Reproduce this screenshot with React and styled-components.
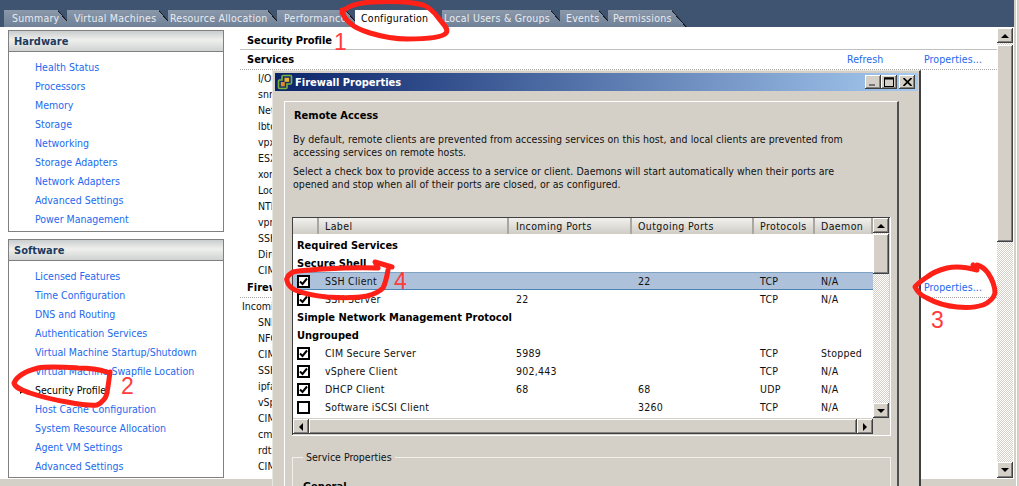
import React from "react";
import styled, { createGlobalStyle, css } from "styled-components";

const Global = createGlobalStyle`
  html, body { margin: 0; padding: 0; background: #d4d0c8; }
  body { font-family: "DejaVu Sans Condensed", "DejaVu Sans", "Liberation Sans", sans-serif; font-size: 10.5px; color: #111; }
`;

const GREY = "#d4d0c8";
const raised = css`
  background: ${GREY};
  box-shadow: inset -1px -1px #404040, inset 1px 1px #fff, inset -2px -2px #808080;
`;

const Page = styled.div`
  position: relative;
  width: 1019px;
  height: 486px;
  overflow: hidden;
  background: ${GREY};
  display: flex;
`;
const Frame = styled.div`
  width: 1014px;
  display: flex;
  flex-direction: column;
`;
const EdgeStrip = styled.div`
  width: 5px;
  height: 486px;
  box-sizing: border-box;
  border-left: 2px solid ${GREY};
  background: linear-gradient(to right, #fff 1px, ${GREY} 1px);
`;
const TopBar = styled.div`
  height: 27px;
  background: #3e5470;
  display: flex;
  align-items: flex-end;
  padding-left: 4px;
  flex: none;
`;
const Tab = styled.div`
  position: relative;
  width: ${p => p.$w}px;
  height: 17px;
  margin-right: -6px;
  box-sizing: border-box;
  padding: 1px 0 0 ${p => p.$pad}px;
  line-height: 15px;
  letter-spacing: 0.25px;
  white-space: nowrap;
  z-index: ${p => (p.$active ? 2 : 1)};
  color: ${p => (p.$active ? "#000" : "#e8ecf2")};
  background: ${p => (p.$active ? "#fff" : "linear-gradient(#8b98aa, #6f8097)")};
  clip-path: polygon(0 0, calc(100% - 15px) 0, 100% 100%, 0 100%);
  &::after {
    content: "";
    position: absolute;
    right: 0;
    top: 0;
    width: 15px;
    height: 17px;
    background: linear-gradient(to top right, transparent calc(50% - 1px), #101418 calc(50% - 1px), #101418 calc(50% + 0.6px), #3e5470 calc(50% + 0.6px));
  }
`;
const Main = styled.div`
  height: 451px;
  background: #fff;
  display: flex;
  flex: none;
  border-bottom: 1px solid #fff;
`;
const LeftCol = styled.div`
  width: 240px;
  flex: none;
  box-sizing: border-box;
  padding: 3px 0 0 8px;
  display: flex;
  flex-direction: column;
  gap: 7px;
`;
const Card = styled.section`
  width: 216px;
  box-sizing: border-box;
  border: 1px solid #808080;
  height: ${p => p.$h}px;
  flex: none;
`;
const CardHead = styled.h3`
  margin: 0;
  height: 20px;
  line-height: 21px;
  padding-left: 5px;
  font-size: 11px;
  font-weight: bold;
  color: #1d3a5c;
  background: linear-gradient(#c9cdcd, #eff0ee 45%, #cfd2d1);
  border-bottom: 1px solid #808080;
`;
const CardList = styled.div`
  padding: 6px 0 0 26px;
`;
const NavLink = styled.div`
  position: relative;
  height: 19px;
  line-height: 19px;
  white-space: nowrap;
  color: ${p => (p.$current ? "#000" : "#2469ee")};
  ${p => p.$current && css`
    &::before {
      content: "";
      position: absolute;
      left: -15px;
      top: 7px;
      border-left: 4px solid #000;
      border-top: 3px solid transparent;
      border-bottom: 3px solid transparent;
    }
  `}
`;
const RightPane = styled.div`
  flex: 1;
  min-width: 0;
  display: flex;
  flex-direction: column;
`;
const Heading = styled.div`
  height: 22px;
  line-height: 27px;
  margin-right: -1px;
  padding-left: 7px;
  font-weight: bold;
  font-size: 11px;
  letter-spacing: -0.1px;
  border-bottom: 1px solid #c0c0c0;
  color: #000;
`;
const SectionRow = styled.div`
  display: flex;
  height: 19px;
  line-height: 19px;
  padding-left: 7px;
  border-bottom: 1px dotted #a8a8a8;
`;
const SectionTitle = styled.div`
  font-weight: bold;
  font-size: 11px;
  color: #000;
  flex: 1;
`;
const ActionLink = styled.span`
  color: #2469ee;
  white-space: nowrap;
  width: ${p => p.$w}px;
  letter-spacing: 0.1px;
`;
const Items = styled.div`
  width: 32px;
  overflow: hidden;
`;
const Item = styled.div`
  height: 16px;
  line-height: 16px;
  white-space: nowrap;
  padding-left: ${p => (p.$out ? 2 : 18)}px;
`;
const MainScroll = styled.div`
  width: 16px;
  flex: none;
  padding-right: 1px;
  box-sizing: content-box;
  display: flex;
  flex-direction: column;
  padding-top: 1px;
`;
const Track = styled.div`
  flex: 1;
  background: repeating-conic-gradient(#d4d0c8 0 25%, #fff 0 50%) 0 0 / 2px 2px;
  display: flex;
  flex-direction: column;
`;
const Thumb = styled.div`
  ${raised}
  height: ${p => p.$h}px;
  margin-top: ${p => p.$top || 0}px;
  flex: none;
`;
const ArrowBtn = styled.div`
  ${raised}
  flex: none;
  width: ${p => p.$w || 16}px;
  height: ${p => p.$h || 15}px;
  display: flex;
  align-items: center;
  justify-content: center;
  &::before {
    content: "";
    ${p => p.$dir === "up" && "border-bottom: 4px solid #000; border-left: 4px solid transparent; border-right: 4px solid transparent;"}
    ${p => p.$dir === "down" && "border-top: 4px solid #000; border-left: 4px solid transparent; border-right: 4px solid transparent;"}
    ${p => p.$dir === "left" && "border-right: 4px solid #000; border-top: 4px solid transparent; border-bottom: 4px solid transparent;"}
    ${p => p.$dir === "right" && "border-left: 4px solid #000; border-top: 4px solid transparent; border-bottom: 4px solid transparent;"}
  }
`;
const BottomStrip = styled.div`
  flex: 1;
  background: ${GREY};
`;

/* dialog, lying over the page */
const Dialog = styled.div`
  position: absolute;
  left: 272px;
  top: 70px;
  width: 649px;
  height: 430px;
  box-sizing: border-box;
  background: ${GREY};
  border-top: 1px solid #e8e6e0;
  border-left: 1px solid #e8e6e0;
  border-right: 2px solid #404040;
  padding: 2px 1px 0 2px;
  z-index: 3;
`;
const TitleBar = styled.div`
  height: 18px;
  background: linear-gradient(to right, #0a246a, #a6caf0);
  display: flex;
  align-items: center;
  padding: 0 3px 0 2px;
  gap: 2px;
  color: #fff;
  font-weight: bold;
  font-size: 11px;
`;
const TitleText = styled.div`
  flex: 1;
`;
const WinBtns = styled.div`
  display: flex;
  align-items: center;
`;
const WinBtn = styled.div`
  ${raised}
  width: 16px;
  height: 14px;
  margin-left: ${p => p.$ml || 0}px;
  display: flex;
  align-items: center;
  justify-content: center;
`;
const Panel = styled.div`
  margin: 10px 20px 0 9px;
  width: 615px;
  height: 400px;
  box-sizing: border-box;
  border-top: 1px solid #fff;
  border-left: 1px solid #fff;
  border-right: 2px solid #505050;
  padding: 0 7px 0 7px;
  color: #111;
`;
const PanelTitle = styled.h4`
  margin: 0;
  height: 26px;
  line-height: 27px;
  padding-left: 2px;
  font-size: 11px;
  font-weight: bold;
  color: #000;
`;
const Para = styled.p`
  margin: ${p => p.$mt || 0}px 0 0 1px;
  line-height: 13px;
  width: 596px;
  letter-spacing: 0.055px;
  white-space: nowrap;
`;
const TableFrame = styled.div`
  margin-top: 26px;
  width: 599px;
  height: 219px;
  box-sizing: border-box;
  padding: 1px 1px 1px 1px;
  border-bottom: 1px solid #fff;
  border-right: 1px solid #fff;
  box-shadow: inset 1px 1px #404040;
  display: grid;
  grid-template-columns: 580px 16px;
  grid-template-rows: 200px 16px;
`;
const TableBody = styled.div`
  background: #fff;
  overflow: hidden;
`;
const cols = "26px 190px 123px 122px 61px 58px";
const HeaderRow = styled.div`
  display: grid;
  grid-template-columns: ${cols};
  height: 16px;
  margin-bottom: 2px;
`;
const HeaderCell = styled.div`
  padding-left: ${p => (p.$wide ? 7 : 6)}px;
  line-height: 16px;
  height: 16px;
  box-sizing: border-box;
  letter-spacing: 0.4px;
  white-space: nowrap;
  background: linear-gradient(#f2f1ee, #cfccc5);
  border-right: 2px solid #a9a7a0;
`;
const GroupRow = styled.div`
  height: 18px;
  line-height: 20px;
  padding-left: 4px;
  font-weight: bold;
  color: #000;
  font-size: 11px;
  white-space: nowrap;
`;
const DataRow = styled.div`
  display: grid;
  grid-template-columns: ${cols};
  height: 18px;
  box-sizing: border-box;
  align-items: center;
  ${p => p.$selected && css`
    background: #adc2da;
    border-top: 1px solid #7da2c4;
    border-bottom: 1px solid #4c84b4;
  `}
`;
const CheckCell = styled.div`
  padding-left: 4px;
  display: flex;
`;
const Check = styled.div`
  width: 13px;
  height: 13px;
  box-sizing: border-box;
  background: #fff;
  border: 2px solid #000;
  display: flex;
  align-items: center;
  justify-content: center;
`;
const Cell = styled.div`
  padding-left: ${p => (p.$wide ? 7 : 6)}px;
  white-space: nowrap;
  letter-spacing: 0.25px;
`;
const VScroll = styled.div`
  display: flex;
  flex-direction: column;
`;
const HScroll = styled.div`
  display: flex;
  height: 15px;
  margin-top: 1px;
`;
const HTrack = styled.div`
  flex: 1;
  ${raised}
`;
const Fieldset = styled.fieldset`
  margin: 15px 0 0 0;
  width: 599px;
  height: 120px;
  box-sizing: border-box;
  padding: 0 0 0 10px;
  border: 1px solid #f2f0ea;
`;
const Legend = styled.legend`
  padding: 0 3px;
  line-height: 13px;
`;
const FieldTitle = styled.div`
  font-weight: bold;
  font-size: 11px;
  margin-top: 16px;
  color: #000;
`;

/* hand-drawn annotations */
const Marks = styled.svg`
  position: absolute;
  left: 0;
  top: 0;
  width: 1019px;
  height: 486px;
  z-index: 4;
  pointer-events: none;
`;
const Num = styled.span`
  position: absolute;
  left: ${p => p.$x}px;
  top: ${p => p.$y}px;
  z-index: 5;
  font-family: "Liberation Sans", sans-serif;
  font-size: 23px;
  line-height: 23px;
  color: #ff3b3b;
`;

const CheckMark = () => (
  <svg width="9" height="9" viewBox="0 0 9 9"><path d="M1 4.5 L3.5 7 L8 1.5" fill="none" stroke="#000" strokeWidth="2" /></svg>
);
const Logo = () => (
  <svg width="16" height="16" viewBox="0 0 16 16" style={{ flex: "none" }}>
    <path d="M6 1.5h7.5a1 1 0 0 1 1 1V9a1 1 0 0 1-1 1H10v3.5a1 1 0 0 1-1 1H2.5a1 1 0 0 1-1-1V7a1 1 0 0 1 1-1H5V2.5a1 1 0 0 1 1-1z" fill="#12306e" stroke="#7fb23c" strokeWidth="1.6" />
    <rect x="7.5" y="3.8" width="4.6" height="4" fill="#f0b030" />
    <rect x="3.8" y="8" width="4" height="4.4" fill="#e08a20" />
  </svg>
);

const hardware = ["Health Status","Processors","Memory","Storage","Networking","Storage Adapters","Network Adapters","Advanced Settings","Power Management"];
const software = ["Licensed Features","Time Configuration","DNS and Routing","Authentication Services","Virtual Machine Startup/Shutdown","Virtual Machine Swapfile Location","Security Profile","Host Cache Configuration","System Resource Allocation","Agent VM Settings","Advanced Settings"];
const services = ["I/O Redirector (Storage vMotion)","snmpd","Network Login Server (Active Directory Service)","lbtd","vpxa","ESXi Shell","xorg","Local Security Authentication Server","NTP Daemon","vprobed","SSH","Direct Console UI","CIM Server"];
const firewall = ["SNMP Server","NFC","CIM Server","SSH Server","ipfam","vSphere Client","CIM Secure Server","cmmds","rdt","CIM SLP"];
const tabs = [["Summary",69,8],["Virtual Machines",107,7],["Resource Allocation",115,2],["Performance",84,7],["Configuration",93,6,true],["Local Users & Groups",124,2],["Events",54,6],["Permissions",79,5]];

const rows = [
  { g: "Required Services" },
  { g: "Secure Shell" },
  { c: 1, l: "SSH Client", o: "22", p: "TCP", d: "N/A", s: 1 },
  { c: 1, l: "SSH Server", i: "22", p: "TCP", d: "N/A" },
  { g: "Simple Network Management Protocol" },
  { g: "Ungrouped" },
  { c: 1, l: "CIM Secure Server", i: "5989", p: "TCP", d: "Stopped" },
  { c: 1, l: "vSphere Client", i: "902,443", p: "TCP", d: "N/A" },
  { c: 1, l: "DHCP Client", i: "68", o: "68", p: "UDP", d: "N/A" },
  { c: 0, l: "Software iSCSI Client", o: "3260", p: "TCP", d: "N/A" },
];

export default function App() {
  return (
    <Page>
      <Global />
      <Frame>
        <TopBar>
          {tabs.map(([t, w, pad, a]) => <Tab key={t} $w={w} $active={a} $pad={pad}>{t}</Tab>)}
        </TopBar>
        <Main>
          <LeftCol>
            <Card $h={202}>
              <CardHead>Hardware</CardHead>
              <CardList>{hardware.map(t => <NavLink key={t}>{t}</NavLink>)}</CardList>
            </Card>
            <Card $h={239}>
              <CardHead>Software</CardHead>
              <CardList>{software.map(t => <NavLink key={t} $current={t === "Security Profile"}>{t}</NavLink>)}</CardList>
            </Card>
          </LeftCol>
          <RightPane>
            <Heading>Security Profile</Heading>
            <SectionRow>
              <SectionTitle>Services</SectionTitle>
              <ActionLink $w={77}>Refresh</ActionLink>
              <ActionLink $w={73}>Properties...</ActionLink>
            </SectionRow>
            <Items>{services.map(t => <Item key={t}>{t}</Item>)}</Items>
            <SectionRow>
              <SectionTitle>Firewall</SectionTitle>
              <ActionLink $w={73}>Properties...</ActionLink>
            </SectionRow>
            <Items>
              <Item $out>Incoming Connections</Item>
              {firewall.map(t => <Item key={t}>{t}</Item>)}
            </Items>
          </RightPane>
          <MainScroll>
            <ArrowBtn $dir="up" $h={15} />
            <Track>
              <Thumb $h={197} $top={2} />
            </Track>
            <ArrowBtn $dir="down" $h={16} />
          </MainScroll>
        </Main>
        <BottomStrip />
      </Frame>
      <EdgeStrip />

      <Dialog>
        <TitleBar>
          <Logo />
          <TitleText>Firewall Properties</TitleText>
          <WinBtns>
            <WinBtn><svg width="8" height="8" viewBox="0 0 8 8"><rect x="0" y="6" width="6" height="2" fill="#777" /></svg></WinBtn>
            <WinBtn><svg width="10" height="10" viewBox="0 0 10 10"><rect x="0.5" y="1" width="9" height="8.5" fill="none" stroke="#000" /><rect x="0" y="0.5" width="10" height="2" fill="#000" /></svg></WinBtn>
            <WinBtn $ml={2}><svg width="9" height="8" viewBox="0 0 9 8"><path d="M0.5 0 L8.5 8 M8.5 0 L0.5 8" stroke="#000" strokeWidth="1.7" /></svg></WinBtn>
          </WinBtns>
        </TitleBar>
        <Panel>
          <PanelTitle>Remote Access</PanelTitle>
          <Para $mt={5}>By default, remote clients are prevented from accessing services on this host, and local clients are prevented from<br />accessing services on remote hosts.</Para>
          <Para $mt={6}>Select a check box to provide access to a service or client. Daemons will start automatically when their ports are<br />opened and stop when all of their ports are closed, or as configured.</Para>
          <TableFrame>
            <TableBody>
              <HeaderRow>
                <HeaderCell />
                <HeaderCell>Label</HeaderCell>
                <HeaderCell $wide>Incoming Ports</HeaderCell>
                <HeaderCell>Outgoing Ports</HeaderCell>
                <HeaderCell>Protocols</HeaderCell>
                <HeaderCell>Daemon</HeaderCell>
              </HeaderRow>
              {rows.map((r, i) => r.g ? <GroupRow key={i}>{r.g}</GroupRow> : (
                <DataRow key={i} $selected={r.s}>
                  <CheckCell><Check>{r.c ? <CheckMark /> : null}</Check></CheckCell>
                  <Cell>{r.l}</Cell>
                  <Cell $wide>{r.i}</Cell>
                  <Cell>{r.o}</Cell>
                  <Cell>{r.p}</Cell>
                  <Cell>{r.d}</Cell>
                </DataRow>
              ))}
            </TableBody>
            <VScroll>
              <ArrowBtn $dir="up" />
              <Track>
                <Thumb $h={40} $top={1} />
              </Track>
              <ArrowBtn $dir="down" />
            </VScroll>
            <HScroll>
              <ArrowBtn $dir="left" />
              <HTrack />
              <ArrowBtn $dir="right" />
            </HScroll>
          </TableFrame>
          <Fieldset>
            <Legend>Service Properties</Legend>
            <FieldTitle>General</FieldTitle>
          </Fieldset>
        </Panel>
      </Dialog>

      <Marks viewBox="0 0 1019 486" fill="none" stroke="#ff2018" strokeWidth="5" strokeLinecap="round" strokeLinejoin="round">
        <path d="M342 13 C346 6 357 3 372 2 C392 1 412 2 423 5 C432 8 436 15 440 20 C444 25 449 29 446 33 C442 38 425 39 407 39 C392 39 380 36 370 33 C360 30 353 26 350 23 C346 20 343 16 342 10" />
        <path d="M107 372 C98 369 88 368 78 368 C62 367 48 366 38 368 C26 371 17 376 14 383 C15 388 22 390 30 393 C42 397 55 400 67 402 C78 404 90 406 97 405 C103 402 106 398 107 393 C108 387 109 380 110 372" />
        <path d="M973 265 L977 270 C966 267 956 266 947 268 C939 270 932 273 927 277 C921 281 917 284 915 287 C918 293 922 296 927 298 C936 303 946 306 957 307 C968 308 977 307 983 305 C990 302 994 297 995 293 C995 286 992 279 988 273 C985 269 981 266 977 265" />
        <path d="M392 267 L375 262 L378 268 C358 267 340 268 323 269 C310 270 300 270 293 272 C288 275 286 278 287 281 C288 285 291 288 295 290 C305 294 316 296 327 297 C342 298 357 298 367 296 C375 294 380 291 383 288 C386 282 387 276 388 270" />
      </Marks>
      <Num $x={334} $y={31}>1</Num>
      <Num $x={121} $y={375}>2</Num>
      <Num $x={931} $y={309}>3</Num>
      <Num $x={394} $y={270}>4</Num>
    </Page>
  );
}
